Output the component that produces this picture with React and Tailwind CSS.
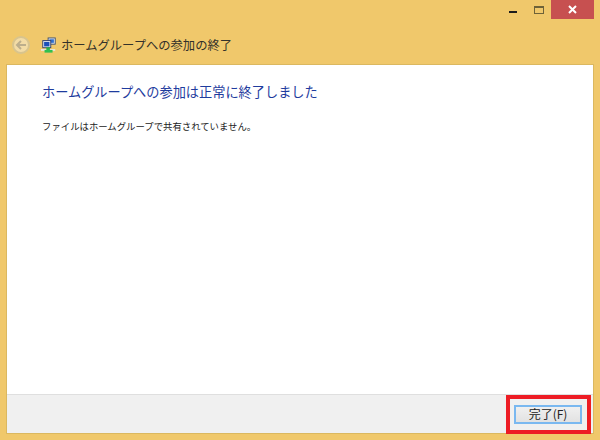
const jp = 'font-["Noto_Sans_CJK_JP","Liberation_Sans",sans-serif]';

// small network icon next to the title
function HomegroupIcon() {
    return (
        <svg width="16" height="17" viewBox="0 0 18 18">
            <rect x="8" y="0.5" width="8" height="7" fill="#dfe6ee" stroke="#3a4a6a" strokeWidth="1"/>
            <rect x="9.5" y="2" width="5" height="4" fill="#2f6fd0"/>
            <rect x="2" y="3.5" width="9" height="8" fill="#e4e9f0" stroke="#2a3a68" strokeWidth="1"/>
            <rect x="3.5" y="5" width="6" height="5" fill="#1c4fb8"/>
            <rect x="0" y="13" width="16" height="2" fill="#e8e8e0"/>
            <rect x="6" y="11" width="4" height="3" fill="#27b04a"/>
            <rect x="4" y="14" width="9" height="3" fill="#30c050"/>
        </svg>
    );
}

function BackButton() {
    return (
        <div className="w-[18px] h-[18px] rounded-full border-2 border-[#d8c48e] bg-[#f3dca6] flex items-center justify-center">
            <svg width="12" height="12" viewBox="0 0 12 12" fill="none" stroke="#bcae8c" strokeWidth="2">
                <path d="M11 6H2.5M6 2L2 6l4 4"/>
            </svg>
        </div>
    );
}

export default function App() {
    return (
        <div className={`relative w-[600px] h-[440px] bg-[#f0c86b] flex flex-col overflow-hidden ${jp}`}>
            {/* caption buttons */}
            <div className="h-[19px] flex justify-end pr-[6px] shrink-0">
                <div className="w-[8px] h-[2px] bg-[#1c1c1c] mt-[11px] mr-[17px]"></div>
                <div className="w-[10px] h-[8px] border border-[#6e6238] border-t-2 mt-[6px] mr-[7px]"></div>
                <div className="w-[43px] h-[19px] bg-[#c75050] flex items-center justify-center">
                    <svg width="9" height="9" viewBox="0 0 9 9" stroke="#fff" strokeWidth="2">
                        <path d="M1 1l7 7M8 1l-7 7"/>
                    </svg>
                </div>
            </div>

            {/* title row */}
            <div className="h-[45px] flex items-center pl-[12px] pt-[7px] shrink-0">
                <BackButton/>
                <div className="ml-[11px] flex"><HomegroupIcon/></div>
                <span className="ml-[4px] text-[12.3px] text-[#33312a]">ホームグループへの参加の終了</span>
            </div>

            {/* content */}
            <div className="mx-[6px] mb-[6px] flex-1 flex flex-col border border-[#dbb860] bg-white">
                <div className="flex-1 pl-[35px] pt-[16px]">
                    <h1 className="text-[13.2px] leading-[22px] font-normal text-[#1f3c9e]">ホームグループへの参加は正常に終了しました</h1>
                    <p className="mt-[15px] text-[9.4px] leading-[16px] text-[#222]">ファイルはホームグループで共有されていません。</p>
                </div>
                <div className="h-[39px] bg-[#f0f0f0] border-t border-[#dfdfdf] flex items-center justify-end pr-[11px]">
                    <button className="w-[68px] h-[19px] border-2 border-[#7ab8f0] bg-gradient-to-b from-[#f0f0f0] to-[#e2e2e2] text-[12px] leading-none text-[#222]">完了(F)</button>
                </div>
            </div>

            {/* red highlight around the button */}
            <div className="absolute left-[506px] top-[395px] w-[85px] h-[39px] border-[4px] border-[#ed1c24]"></div>
        </div>
    );
}
